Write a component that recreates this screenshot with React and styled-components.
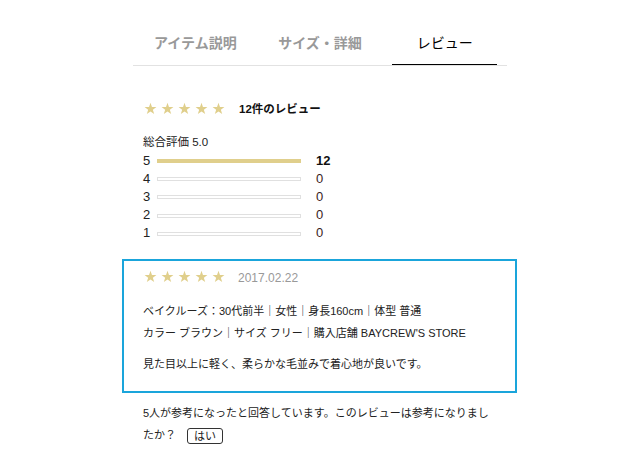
import React from "react";
import styled, { createGlobalStyle } from "styled-components";

const Global = createGlobalStyle`
  html, body { margin: 0; padding: 0; background: #fff; }
  body {
    font-family: "Liberation Sans", "Noto Sans CJK JP", sans-serif;
    color: #222;
    -webkit-font-smoothing: antialiased;
  }
`;

const Page = styled.div`
  width: 374px;
  margin: 0 auto;
`;

const TabList = styled.div`
  display: flex;
  border-bottom: 1px solid #e2e2e2;
`;

const Tab = styled.div`
  flex: 1;
  padding: 0 10px;
`;

const TabLabel = styled.div`
  text-align: center;
  font-size: 14px;
  line-height: 20px;
  padding: 33px 0 11px;
  font-weight: ${(p) => (p.$active ? 400 : 700)};
  color: ${(p) => (p.$active ? "#000" : "#999")};
  border-bottom: 1px solid ${(p) => (p.$active ? "#000" : "transparent")};
`;

const Body = styled.div`
  padding: 34px 10px 0;
`;

const StarRow = styled.div`
  display: flex;
  align-items: center;
  height: 16px;
  padding-left: 1px;
  gap: 4px;
`;

const StarSvg = styled.svg`
  width: 13px;
  height: 13px;
  flex: none;
  fill: #e0cf8c;
`;

const TotalCount = styled.span`
  margin-left: 10px;
  font-size: 11.5px;
  font-weight: 700;
  color: #111;
`;

const Overall = styled.div`
  margin-top: 18px;
  font-size: 11.5px;
  line-height: 16px;
`;

const Dist = styled.div`
  margin-top: 2px;
  display: flex;
  flex-direction: column;
`;

const DistRow = styled.div`
  display: flex;
  align-items: center;
  height: 18.2px;
  font-size: 13px;
`;

const DistLabel = styled.span`
  width: 14px;
  margin-top: -2px;
`;

const Bar = styled.div`
  width: 144px;
  height: 4px;
  box-sizing: border-box;
  background: ${(p) => (p.$filled ? "#e0cf8c" : "#fff")};
  border: 1px solid ${(p) => (p.$filled ? "#e0cf8c" : "#e0e0e0")};
`;

const DistCount = styled.span`
  margin-left: 15px;
  margin-top: -2px;
  font-weight: ${(p) => (p.$bold ? 700 : 400)};
  color: ${(p) => (p.$bold ? "#111" : "#3a1c1c")};
`;

const ReviewBox = styled.div`
  margin: 16px -20px 0 -21px;
  border: 2px solid #1aa5db;
  padding: 8px 19px 15px;
`;

const ReviewHead = styled.div`
  display: flex;
  align-items: center;
`;

const DateText = styled.span`
  margin-left: 9px;
  font-size: 12px;
  color: #999;
  margin-top: 2px;
`;

const Meta = styled.p`
  margin: 16px 0 0;
  font-size: 11px;
  line-height: 21.7px;
`;

const Comment = styled.p`
  margin: 10px 0 0;
  font-size: 11px;
  line-height: 21.7px;
`;

const Helpful = styled.div`
  margin: 9px 0 0;
  font-size: 11px;
  line-height: 22px;
`;

const Question = styled.span``;

const YesButton = styled.button`
  display: inline-flex;
  align-items: center;
  justify-content: center;
  margin-left: 11px;
  font-family: inherit;
  font-size: 11px;
  line-height: 12px;
  padding: 0 6px;
  height: 16px;
  background: #fff;
  color: #222;
  border: 1px solid #333;
  border-radius: 3px;
  vertical-align: middle;
`;

const Star = () => (
  <StarSvg viewBox="0 0 24 24">
    <polygon points="12,1.3 14.7,9.08 22.94,9.25 16.37,14.22 18.76,22.1 12,17.4 5.24,22.1 7.63,14.22 1.06,9.25 9.3,9.08" />
  </StarSvg>
);

const Stars = ({ children }) => (
  <StarRow>
    {[0, 1, 2, 3, 4].map((i) => (
      <Star key={i} />
    ))}
    {children}
  </StarRow>
);

const dist = [
  { n: 5, c: 12 },
  { n: 4, c: 0 },
  { n: 3, c: 0 },
  { n: 2, c: 0 },
  { n: 1, c: 0 },
];

export default function App() {
  return (
    <>
      <Global />
      <Page>
        <TabList>
          <Tab>
            <TabLabel>アイテム説明</TabLabel>
          </Tab>
          <Tab>
            <TabLabel>サイズ・詳細</TabLabel>
          </Tab>
          <Tab>
            <TabLabel $active>レビュー</TabLabel>
          </Tab>
        </TabList>
        <Body>
          <Stars>
            <TotalCount>12件のレビュー</TotalCount>
          </Stars>
          <Overall>総合評価 5.0</Overall>
          <Dist>
            {dist.map((d) => (
              <DistRow key={d.n}>
                <DistLabel>{d.n}</DistLabel>
                <Bar $filled={d.c > 0} />
                <DistCount $bold={d.c > 0}>{d.c}</DistCount>
              </DistRow>
            ))}
          </Dist>
          <ReviewBox>
            <ReviewHead>
              <Stars>
                <DateText>2017.02.22</DateText>
              </Stars>
            </ReviewHead>
            <Meta>
              ベイクルーズ：30代前半｜女性｜身長160cm｜体型 普通
              <br />
              カラー ブラウン｜サイズ フリー｜購入店舗 BAYCREW'S STORE
            </Meta>
            <Comment>見た目以上に軽く、柔らかな毛並みで着心地が良いです。</Comment>
          </ReviewBox>
          <Helpful>
            <Question>5人が参考になったと回答しています。このレビューは参考になりましたか？</Question>
            <YesButton>はい</YesButton>
          </Helpful>
        </Body>
      </Page>
    </>
  );
}
